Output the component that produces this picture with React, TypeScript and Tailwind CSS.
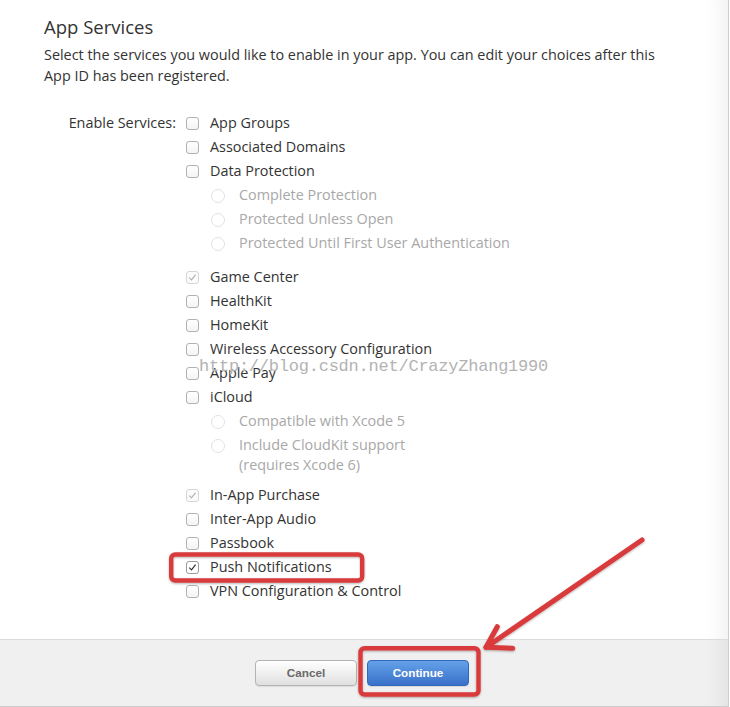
import React from "react";

type BoxState = "off" | "on" | "disabledOn";

function Box({ state }: { state: BoxState }) {
  if (state === "disabledOn") {
    return (
      <span className="mt-[6px] flex h-[13px] w-[13px] shrink-0 items-center justify-center rounded-[3px] border border-[#d6d6d6] bg-[#fbfbfb]">
        <svg width="11" height="11" viewBox="0 0 11 11">
          <path d="M2.3 5.6 L4.5 7.9 L8.6 2.6" fill="none" stroke="#b0b0b0" strokeWidth="1.1" />
        </svg>
      </span>
    );
  }
  if (state === "on") {
    return (
      <span className="mt-[6px] flex h-[13px] w-[13px] shrink-0 items-center justify-center rounded-[3px] border border-[#9a9a9a] bg-white">
        <svg width="11" height="11" viewBox="0 0 11 11">
          <path d="M2.3 5.6 L4.5 7.9 L8.6 2.6" fill="none" stroke="#333" strokeWidth="1.2" />
        </svg>
      </span>
    );
  }
  return (
    <span className="mt-[6px] block h-[13px] w-[13px] shrink-0 rounded-[3px] border border-[#b2b2b2] bg-gradient-to-b from-white to-[#f4f4f4]" />
  );
}

function CheckRow({ label, state = "off" }: { label: string; state?: BoxState }) {
  return (
    <div className="flex h-[24px] items-start">
      <Box state={state} />
      <span className="ml-[11px] leading-[24px] whitespace-nowrap">{label}</span>
    </div>
  );
}

function RadioRow({ label, extra }: { label: string; extra?: string }) {
  return (
    <div className="flex items-start pl-[25px]">
      <span className="mt-[6px] block h-[14px] w-[14px] shrink-0 rounded-full border border-[#e2e2e2] bg-white" />
      <div className="ml-[14px] text-[#a8a8a8]">
        <div className="leading-[24px] whitespace-nowrap">{label}</div>
        {extra && <div className="-mt-[4px] leading-[24px] whitespace-nowrap">{extra}</div>}
      </div>
    </div>
  );
}

export default function App() {
  return (
    <div className="relative h-[707px] w-[730px] overflow-hidden bg-white font-['Open_Sans',sans-serif] text-[#333]">
      <div className="flex h-[707px] w-[729px] flex-col border-r border-b border-[#cdcdcd]">
        <div className="h-[639px] shrink-0 pl-[44px] pt-[15px] shadow-[inset_-22px_0_22px_-18px_rgba(0,0,0,0.07)]">
          <h2 className="text-[18.5px] leading-[24px] text-[#333]">App Services</h2>
          <p className="mt-[5px] text-[14.4px] leading-[21px]">
            Select the services you would like to enable in your app. You can edit your choices after this
            <br />
            App ID has been registered.
          </p>
          <div className="mt-[25px] flex text-[14.4px]">
            <div className="w-[142px] shrink-0 pr-[10px] text-right leading-[24px] whitespace-nowrap">Enable Services:</div>
            <div className="flex flex-col">
              <CheckRow label="App Groups" />
              <CheckRow label="Associated Domains" />
              <CheckRow label="Data Protection" />
              <RadioRow label="Complete Protection" />
              <RadioRow label="Protected Unless Open" />
              <RadioRow label="Protected Until First User Authentication" />
              <div className="h-[10px]" />
              <CheckRow label="Game Center" state="disabledOn" />
              <CheckRow label="HealthKit" />
              <CheckRow label="HomeKit" />
              <CheckRow label="Wireless Accessory Configuration" />
              <CheckRow label="Apple Pay" />
              <CheckRow label="iCloud" />
              <RadioRow label="Compatible with Xcode 5" />
              <RadioRow label="Include CloudKit support" extra="(requires Xcode 6)" />
              <div className="h-[6px]" />
              <CheckRow label="In-App Purchase" state="disabledOn" />
              <CheckRow label="Inter-App Audio" />
              <CheckRow label="Passbook" />
              <CheckRow label="Push Notifications" state="on" />
              <CheckRow label="VPN Configuration & Control" />
            </div>
          </div>
        </div>
        <div className="flex flex-1 items-center justify-center gap-[10px] border-t border-[#dcdcdc] bg-[#f0f0f0] pr-[4px] shadow-[inset_-22px_0_22px_-18px_rgba(0,0,0,0.07)] font-['Liberation_Sans',Arial,sans-serif]">
          <button className="h-[26px] w-[102px] rounded-[4px] border border-[#b3b3b3] bg-gradient-to-b from-white to-[#e0e0e0] text-[11.7px] font-bold text-[#6a6a6a] shadow-[0_1px_1px_rgba(0,0,0,0.08)]">
            Cancel
          </button>
          <button className="h-[26px] w-[102px] rounded-[4px] border border-[#2f68bd] bg-gradient-to-b from-[#64a1e9] to-[#3a71c9] text-[11.7px] font-bold text-white shadow-[0_1px_1px_rgba(0,0,0,0.1)]">
            Continue
          </button>
        </div>
      </div>

      <div className="pointer-events-none absolute left-[199px] top-[358px] font-['Liberation_Mono',monospace] text-[17px] leading-[17px] tracking-[-0.23px] whitespace-nowrap text-[#b3b3b3] [text-shadow:0_0_1px_#ffffff]">
        http://blog.csdn.net/CrazyZhang1990
      </div>

      <svg className="pointer-events-none absolute left-0 top-0" width="730" height="707" viewBox="0 0 730 707">
        <defs>
          <filter id="sh" x="-10%" y="-10%" width="120%" height="130%">
            <feDropShadow dx="0" dy="1" stdDeviation="1.2" floodColor="#000" floodOpacity="0.3" />
          </filter>
        </defs>
        <g filter="url(#sh)" fill="none" stroke="#d93a3c" strokeWidth="4.4" strokeLinecap="round" strokeLinejoin="round">
          <rect x="171.2" y="554.5" width="191" height="26" rx="4" />
          <rect x="360.5" y="648.2" width="118" height="46.3" rx="4" />
          <path d="M642 540 L486 647.3" strokeWidth="5" />
          <path d="M497.3 626.7 L486 647.3 L512.7 648.3" strokeWidth="5" />
        </g>
      </svg>
    </div>
  );
}
